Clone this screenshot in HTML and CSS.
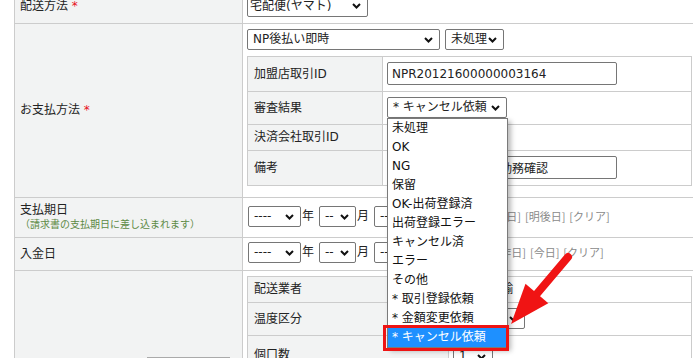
FILE: index.html
```html
<!DOCTYPE html>
<html lang="ja">
<head>
<meta charset="utf-8">
<title>受注編集</title>
<link rel="stylesheet" href="styles.css">
</head>
<body>
<div class="form">
  <div class="row r1">
    <div class="th"><div>配送方法 <span class="req">*</span></div></div>
    <div class="td td-r1">
      <div class="sel w-ship">宅配便(ヤマト)<svg class="chev" viewBox="0 0 9 6"><polyline points="1,1 4.5,4.5 8,1"/></svg></div>
    </div>
  </div>

  <div class="row r2">
    <div class="th"><div>お支払方法 <span class="req">*</span></div></div>
    <div class="td td-r2">
      <div class="line">
        <div class="sel w-np">NP後払い即時<svg class="chev" viewBox="0 0 9 6"><polyline points="1,1 4.5,4.5 8,1"/></svg></div>
        <div class="sel w-state">未処理<svg class="chev" viewBox="0 0 9 6"><polyline points="1,1 4.5,4.5 8,1"/></svg></div>
      </div>
      <div class="sub">
        <div class="srow h35">
          <div class="sth">加盟店取引ID</div>
          <div class="std"><input class="inp" type="text" value="NPR20121600000003164"></div>
        </div>
        <div class="srow h33">
          <div class="sth">審査結果</div>
          <div class="std">
            <div class="sel w-review dd-anchor">* キャンセル依頼<svg class="chev" viewBox="0 0 9 6"><polyline points="1,1 4.5,4.5 8,1"/></svg>
              <div class="dropdown">
                <div class="opt">未処理</div>
                <div class="opt">OK</div>
                <div class="opt">NG</div>
                <div class="opt">保留</div>
                <div class="opt">OK-出荷登録済</div>
                <div class="opt">出荷登録エラー</div>
                <div class="opt">キャンセル済</div>
                <div class="opt">エラー</div>
                <div class="opt">その他</div>
                <div class="opt">* 取引登録依頼</div>
                <div class="opt">* 金額変更依頼</div>
                <div class="opt active">* キャンセル依頼</div>
                <div class="mark"></div>
              </div>
            </div>
          </div>
        </div>
        <div class="srow h26">
          <div class="sth">決済会社取引ID</div>
          <div class="std"></div>
        </div>
        <div class="srow h35">
          <div class="sth">備考</div>
          <div class="std"><input class="inp" type="text" value="配達前に電話連絡要勤務確認"></div>
        </div>
      </div>
    </div>
  </div>

  <div class="row r3">
    <div class="th">
      <div>支払期日</div>
      <div class="note">（請求書の支払期日に差し込まれます）</div>
    </div>
    <div class="td td-date">
      <div class="dateline">
        <div class="sel w-year">----<svg class="chev" viewBox="0 0 9 6"><polyline points="1,1 4.5,4.5 8,1"/></svg></div><span class="unit">年</span>
        <div class="sel w-md">--<svg class="chev" viewBox="0 0 9 6"><polyline points="1,1 4.5,4.5 8,1"/></svg></div><span class="unit">月</span>
        <div class="sel w-md">--<svg class="chev" viewBox="0 0 9 6"><polyline points="1,1 4.5,4.5 8,1"/></svg></div><span class="unit">日</span>
        <div class="links links-due"><a>[今日]</a><a>[明日]</a><a>[明後日]</a><a>[クリア]</a></div>
      </div>
    </div>
  </div>

  <div class="row r4">
    <div class="th">入金日</div>
    <div class="td td-date td-pay">
      <div class="dateline">
        <div class="sel w-year">----<svg class="chev" viewBox="0 0 9 6"><polyline points="1,1 4.5,4.5 8,1"/></svg></div><span class="unit">年</span>
        <div class="sel w-md">--<svg class="chev" viewBox="0 0 9 6"><polyline points="1,1 4.5,4.5 8,1"/></svg></div><span class="unit">月</span>
        <div class="sel w-md">--<svg class="chev" viewBox="0 0 9 6"><polyline points="1,1 4.5,4.5 8,1"/></svg></div><span class="unit">日</span>
        <div class="links links-paid"><a>[一昨日]</a><a>[昨日]</a><a>[今日]</a><a>[クリア]</a></div>
      </div>
    </div>
  </div>

  <div class="row r5">
    <div class="th th-r5">
      <span class="r5-label">配送先</span>
      <span class="r5-box"></span>
    </div>
    <div class="td td-r5">
      <div class="sub">
        <div class="srow h26">
          <div class="sth sth-wide">配送業者</div>
          <div class="std">ヤマト運輸</div>
        </div>
        <div class="srow h33">
          <div class="sth sth-wide">温度区分</div>
          <div class="std"><div class="sel w-temp">常温<svg class="chev" viewBox="0 0 9 6"><polyline points="1,1 4.5,4.5 8,1"/></svg></div></div>
        </div>
        <div class="srow h40">
          <div class="sth sth-wide">個口数</div>
          <div class="std std-count"><div class="sel w-count">1<svg class="chev" viewBox="0 0 9 6"><polyline points="1,1 4.5,4.5 8,1"/></svg></div></div>
        </div>
      </div>
    </div>
  </div>
</div>

<svg class="arrow" width="80" height="90" viewBox="500 245 80 90">
  <line x1="568" y1="257" x2="535" y2="296" stroke="#f01414" stroke-width="8" stroke-linecap="round"/>
  <polygon points="511,324 525.5,283.8 548.3,303.2" fill="#f01414"/>
</svg>
</body>
</html>
```

FILE: styles.css
```css
html, body {
  margin: 0;
  padding: 0;
  overflow: hidden;
  background: #fff;
}

body {
  display: flow-root;
  position: relative;
  width: 693px;
  height: 358px;
  font-family: "DejaVu Sans", "Noto Sans CJK JP", sans-serif;
  font-size: 12px;
  line-height: 15px;
  color: #222;
}

.form {
  margin-top: -11px;
  margin-left: 14px;
  width: 740px;
  border-left: 1px solid #ccc;
}

.row {
  display: flex;
  box-sizing: border-box;
  border-bottom: 1px solid #ccc;
}

.r1 { height: 35px; }
.r2 { height: 174px; }
.r3 { height: 40px; }
.r4 { height: 33px; }
.r5 { height: 140px; }

.th {
  box-sizing: border-box;
  flex: none;
  width: 228px;
  background: #f2f3f3;
  border-right: 1px solid #ccc;
  padding-left: 5px;
  display: flex;
  flex-direction: column;
  justify-content: center;
}

.req {
  color: #e8101c;
}

.note {
  font-size: 10px;
  line-height: 14px;
  color: #5d8a45;
}

.td {
  flex: 1;
  box-sizing: border-box;
  padding: 5px 0 0 4px;
}

.td-r1 {
  display: flex;
  align-items: center;
  padding-top: 0;
}

.line {
  display: flex;
  gap: 5px;
}

/* fake select boxes */
.sel {
  box-sizing: border-box;
  display: inline-flex;
  align-items: center;
  justify-content: space-between;
  height: 21px;
  padding: 0 6px 0 5px;
  border: 1px solid #767676;
  border-radius: 2px;
  background: #fff;
  white-space: nowrap;
  flex: none;
}

.chev {
  flex: none;
  width: 9px;
  height: 6px;
  fill: none;
  stroke: #111;
  stroke-width: 2;
}

.w-ship { width: 121px; padding-left: 2px; }
.w-np { width: 193px; }
.w-state { width: 59px; }
.w-review { width: 120px; }
.w-year { width: 53px; }
.w-md { width: 37px; }
.w-temp { width: 72px; }
.w-count { width: 40px; }

/* nested tables */
.sub {
  box-sizing: border-box;
  width: 445px;
  margin-top: 6px;
  border: 1px solid #ccc;
  border-bottom: none;
}

.td-r5 .sub { margin-top: 0; }

.srow {
  display: flex;
  box-sizing: border-box;
  border-bottom: 1px solid #ccc;
}

.h26 { height: 26px; }
.h33 { height: 33px; }
.h35 { height: 35px; }
.h40 { height: 40px; }

.sth {
  box-sizing: border-box;
  flex: none;
  width: 135px;
  padding-left: 6px;
  background: #f2f3f3;
  border-right: 1px solid #ccc;
  display: flex;
  align-items: center;
}

.sth-wide { width: 201px; }

.std {
  flex: 1;
  padding: 5px 0 0 4px;
  display: flex;
  align-items: flex-start;
}

.h26 .std { align-items: center; padding-top: 0; }

.std-count { padding-top: 10px; }

.inp {
  box-sizing: border-box;
  width: 230px;
  height: 23px;
  margin: 0;
  padding: 0 4px;
  border: 1px solid #767676;
  border-radius: 2px;
  font: inherit;
  color: #222;
  background: #fff;
  outline: none;
}

/* date rows */
.td-date {
  padding: 8px 0 0 5px;
}

.td-pay { padding-top: 4px; }

.dateline {
  display: flex;
  align-items: center;
  height: 21px;
}

.unit {
  margin: 0 5px 0 1px;
}

.links {
  display: flex;
  gap: 4px;
  margin-left: 29px;
  font-family: "Noto Sans CJK JP", sans-serif;
  font-size: 11px;
  color: #8a8a8a;
}

.links-paid {
  margin-left: 23px;
}

.links a {
  color: inherit;
  text-decoration: none;
}

/* open dropdown list */
.dd-anchor {
  position: relative;
}

.dropdown {
  position: absolute;
  left: -1px;
  top: 20px;
  z-index: 10;
  box-sizing: border-box;
  width: 121px;
  border: 1px solid #7a7a7a;
  background: #fff;
  box-shadow: 3px 3px 5px rgba(0, 0, 0, 0.28);
  color: #111;
}

.opt {
  height: 19px;
  line-height: 19px;
  padding-left: 4px;
  white-space: nowrap;
}

.opt.active {
  background: #1e90ff;
  color: #fff;
}

.mark {
  position: absolute;
  left: -5px;
  top: 206px;
  box-sizing: border-box;
  width: 126px;
  height: 26px;
  border: 3px solid #ee1414;
}

/* last row label area */
.th-r5 {
  flex-direction: row;
  justify-content: flex-start;
  align-items: flex-start;
  padding-top: 88px;
}

.r5-label {
  margin-left: 13px;
}

.r5-box {
  box-sizing: border-box;
  width: 83px;
  height: 20px;
  margin-left: 78px;
  margin-top: -2px;
  border: 1px solid #aaa;
  background: #e9e9e9;
}

.arrow {
  position: absolute;
  left: 500px;
  top: 245px;
  z-index: 20;
}
```
